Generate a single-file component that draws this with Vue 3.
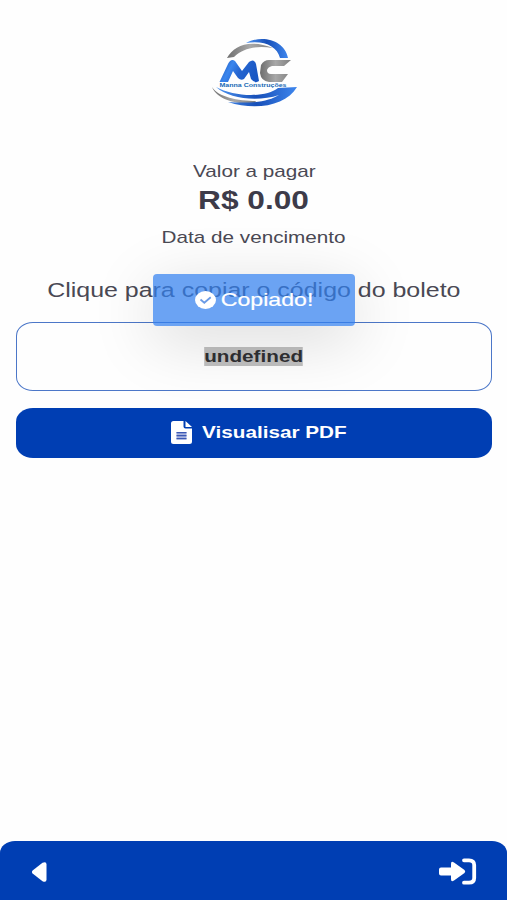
<script setup>
const invoice = { amount: 'R$ 0.00', code: 'undefined' }
</script>

<template>
  <div class="screen">
    <svg class="logo" viewBox="0 0 107 85" role="img" aria-label="Manna Construções">
      <defs>
        <linearGradient id="blue" x1="0" x2="1" y1="0" y2="0.3">
          <stop offset="0" stop-color="#1c4fae" />
          <stop offset="0.35" stop-color="#3a86ee" />
          <stop offset="0.6" stop-color="#2565d0" />
          <stop offset="1" stop-color="#1a58c4" />
        </linearGradient>
        <linearGradient id="swoosh" x1="0" x2="1">
          <stop offset="0" stop-color="#4f96f2" />
          <stop offset="0.5" stop-color="#174fb8" />
          <stop offset="1" stop-color="#3f87ee" />
        </linearGradient>
        <linearGradient id="gray" x1="0" x2="1">
          <stop offset="0" stop-color="#6e6e6e" />
          <stop offset="0.5" stop-color="#a8a8a8" />
          <stop offset="1" stop-color="#808080" />
        </linearGradient>
      </defs>
      <path fill="url(#gray)" d="M27 28C34 15 50 9 73 18C57 15 43 18 34 27Z" />
      <path fill="url(#swoosh)" d="M46 13C63 4 85 11 88 28L80 28C77 16 64 10 46 13Z" />
      <path fill="url(#blue)" d="M19.500 52L28 34Q31 28 35 31L42 41L49 32Q54 28 56 34L59 51Q55 54 51 49L49 42L44 49Q41 51 38 48L33 41L28 52Z" />
      <path fill="url(#gray)" d="M61 35Q64 30 69 30H91L84 36H72Q68 37 67 40Q67 44 71 44H88L82 52H69Q61 51 60 43Z" />
      <text x="19.500" y="56.800" textLength="67" lengthAdjust="spacingAndGlyphs">Manna Construções</text>
      <path fill="url(#gray)" d="M12 57C18 67 38 71 56 71L54 74C34 74 17 69 12 57Z" />
      <path fill="url(#swoosh)" d="M16 57C34 67 66 68 78 58L97 57C86 76 55 81 28 72C55 74 69 71 79 65C58 72 29 69 16 57Z" />
    </svg>

    <main class="content">
      <p class="line label"><span class="wide">Valor a pagar</span></p>
      <p class="line amount"><span class="wide">{{ invoice.amount }}</span></p>
      <p class="line due"><span class="wide">Data de vencimento</span></p>
      <p class="line hint"><span class="wide">Clique para copiar o código do boleto</span></p>
      <button class="code"><span class="wide selected">{{ invoice.code }}</span></button>
      <button class="pdf">
        <svg class="file" viewBox="0 0 21 23">
          <path fill="#fff" d="M2.500 0H12.500V5.500Q12.500 7.500 14.500 7.500H21V20.500Q21 23 18.500 23H2.500Q0 23 0 20.500V2.500Q0 0 2.500 0ZM14.500 0L21 6H14.500Z" />
          <path fill="#a9b4df" d="M5.500 11H15.500V18.500H5.500Z" />
          <path stroke="#3c59b5" stroke-width="1.200" d="M5.500 11.700H15.500M5.500 14.700H15.500M5.500 17.700H15.500" />
        </svg>
        <span class="pdf-text"><span class="wide">Visualisar PDF</span></span>
      </button>
    </main>

    <footer class="bar">
      <svg class="back" viewBox="0 0 15 20"><path fill="#fff" d="M0.600 8.500L10.500 0.700Q14.500 -1 14.500 2.500V17.500Q14.500 21 10.500 19.300L0.600 11.500Q-0.800 10 0.600 8.500Z" /></svg>
      <svg class="exit" viewBox="0 0 38 27">
        <path fill="#fff" d="M2 9.500H12V6Q12 2.500 15 4.500L25.500 12Q27 13.500 25.500 15L15 22.500Q12 24.500 12 21V17.500H2Q0 17.500 0 15.500V11.500Q0 9.500 2 9.500Z" />
        <path fill="none" stroke="#fff" stroke-width="3.800" stroke-linecap="round" d="M25 2.300H30Q35.200 2.300 35.200 7V20Q35.200 24.700 30 24.700H25" />
      </svg>
    </footer>

    <div class="toast" role="status">
      <svg class="check" viewBox="0 0 21 18">
        <ellipse cx="10.500" cy="9" rx="10.500" ry="9" fill="#fff" />
        <path fill="none" stroke="#6a9be6" stroke-width="1.800" d="M5.500 8.500L9.300 11.700L15.700 6.300" />
      </svg>
      <span class="toast-text"><span class="wide">Copiado!</span></span>
    </div>
  </div>
</template>

<style>
body { background: #fefefe; }
</style>

<style scoped>
.screen {
  position: relative;
  display: flex;
  flex-direction: column;
  height: 900px;
  overflow: hidden;
  background: #fefefe;
  color: #4a4954;
  font-family: "Liberation Sans", Arial, sans-serif;
}
.logo {
  width: 107px;
  height: 85px;
  margin: 30px auto 0;
  flex: none;
}
.logo text { font-size: 6px; font-weight: 700; fill: #1769b5; }
.content {
  display: flex;
  flex-direction: column;
  flex: 1;
  padding: 45px 15px 0 16px;
}
.line { margin: 0; text-align: center; white-space: nowrap; }
.wide { display: inline-block; transform: scaleX(1.217); white-space: nowrap; }
.label { font-size: 17px; line-height: 23px; }
.amount { font-size: 26px; line-height: 34px; font-weight: 700; color: #3d3b49; }
.due { font-size: 17px; line-height: 22px; margin-top: 10px; }
.hint { font-size: 20.5px; line-height: 28px; margin-top: 27px; }
button { font-family: inherit; padding: 0; cursor: pointer; }
.code {
  height: 69px;
  margin-top: 18px;
  border: 1.5px solid #4c77c8;
  border-radius: 17px / 14px;
  background: transparent;
  font-size: 17px;
  font-weight: 700;
  color: #303033;
}
.selected { line-height: 19px; background: #c1c1c1; }
.pdf {
  display: flex;
  align-items: center;
  justify-content: center;
  gap: 9px;
  height: 50px;
  margin-top: 17px;
  border: 0;
  padding: 0 0 1px 10px;
  border-radius: 17px / 14px;
  background: #003eb3;
  color: #fff;
  font-size: 17px;
  font-weight: 700;
}
.file { width: 21px; height: 23px; }
.pdf-text { width: 146px; padding-top: 1px; text-align: center; }
.bar {
  display: flex;
  align-items: center;
  justify-content: space-between;
  flex: none;
  height: 59px;
  box-sizing: border-box;
  padding: 2px 30px 0 32px;
  border-radius: 15px 15px 0 0 / 12px 12px 0 0;
  background: #003eb3;
}
.back { width: 15px; height: 20px; }
.exit { width: 38px; height: 27px; }
.toast {
  position: absolute;
  left: 153px;
  top: 274px;
  display: flex;
  align-items: center;
  justify-content: center;
  gap: 5px;
  width: 202px;
  height: 52px;
  box-sizing: border-box;
  padding-bottom: 1px;
  border-radius: 4px;
  background: rgba(50, 127, 239, 0.72);
  box-shadow: 0 14px 64px rgba(0, 0, 0, 0.15);
  color: #fff;
  font-size: 19px;
  -webkit-text-stroke: 0.2px #fff;
}
.check { width: 21px; height: 18px; }
.toast-text { width: 93px; text-align: center; }
</style>
